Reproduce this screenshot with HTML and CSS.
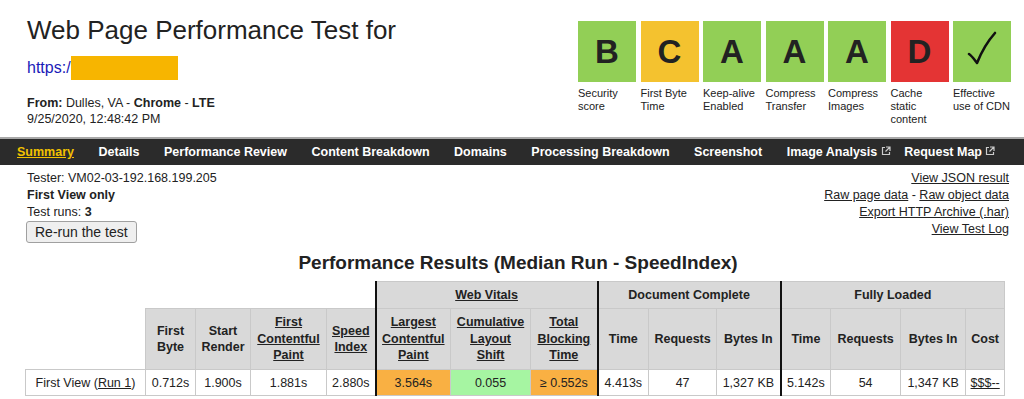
FILE: index.html
```html
<!DOCTYPE html>
<html lang="en">
<head>
    <meta charset="UTF-8">
    <meta name="viewport" content="width=device-width, initial-scale=1.0">
    <title>Web Page Performance Test</title>
    <link rel="stylesheet" href="styles.css">
</head>
<body>
    <div class="page-head">
        <div class="title-block">
            <h1>Web Page Performance Test for</h1>
            <div class="url">
                <a href="#">https:/</a><span class="redact"></span>
            </div>
            <p class="meta"><b>From:</b> Dulles, VA - <b>Chrome</b> - <b>LTE</b><br>9/25/2020, 12:48:42 PM</p>
        </div>
        <ul class="grades">
            <li><div class="grade green">B</div><span>Security score</span></li>
            <li><div class="grade yellow">C</div><span>First Byte Time</span></li>
            <li><div class="grade green">A</div><span>Keep-alive Enabled</span></li>
            <li><div class="grade green">A</div><span>Compress Transfer</span></li>
            <li><div class="grade green">A</div><span>Compress Images</span></li>
            <li><div class="grade red">D</div><span>Cache static content</span></li>
            <li>
                <div class="grade green">
                    <svg width="58" height="61" viewBox="0 0 58 61"><path d="M16 33 C19 35 21 38 24 42 C28 32 34 21 42 12" fill="none" stroke="#111" stroke-width="2.6" stroke-linecap="round" stroke-linejoin="round"/></svg>
                </div>
                <span>Effective use of CDN</span>
            </li>
        </ul>
    </div>

    <!-- 顶部导航 -->
    <ul class="tabs">
        <li><a class="current" href="#">Summary</a></li>
        <li><a href="#">Details</a></li>
        <li><a href="#">Performance Review</a></li>
        <li><a href="#">Content Breakdown</a></li>
        <li><a href="#">Domains</a></li>
        <li><a href="#">Processing Breakdown</a></li>
        <li><a href="#">Screenshot</a></li>
        <li class="has-ext"><a href="#">Image Analysis <svg class="ext" width="10" height="10" viewBox="0 0 10 10"><path d="M4 1.5H1.5V8.5H8.5V6" fill="none" stroke="#ccc" stroke-width="1.2"/><path d="M5 1H9V5M9 1L4.5 5.5" fill="none" stroke="#ccc" stroke-width="1.2"/></svg></a></li>
        <li class="has-ext"><a href="#">Request Map <svg class="ext" width="10" height="10" viewBox="0 0 10 10"><path d="M4 1.5H1.5V8.5H8.5V6" fill="none" stroke="#ccc" stroke-width="1.2"/><path d="M5 1H9V5M9 1L4.5 5.5" fill="none" stroke="#ccc" stroke-width="1.2"/></svg></a></li>
    </ul>

    <div class="info">
        <div class="test-info">
            <div>Tester: VM02-03-192.168.199.205</div>
            <div><b>First View only</b></div>
            <div>Test runs: <b>3</b></div>
            <button>Re-run the test</button>
        </div>
        <div class="raw-links">
            <div><a href="#">View JSON result</a></div>
            <div><a href="#">Raw page data</a> - <a href="#">Raw object data</a></div>
            <div><a href="#">Export HTTP Archive (.har)</a></div>
            <div><a href="#">View Test Log</a></div>
        </div>
    </div>

    <h2 class="results-title">Performance Results (Median Run - SpeedIndex)</h2>

    <table class="results">
        <colgroup>
            <col class="c-label">
            <col class="c-fb"><col class="c-sr"><col class="c-fcp"><col class="c-si">
            <col class="c-lcp"><col class="c-cls"><col class="c-tbt">
            <col class="c-time"><col class="c-req"><col class="c-bytes">
            <col class="c-time2"><col class="c-req2"><col class="c-bytes2"><col class="c-cost">
        </colgroup>
        <tr class="group-row">
            <td class="blank" colspan="5"></td>
            <th class="thick-l thick-r" colspan="3"><a href="#">Web Vitals</a></th>
            <th class="thick-r" colspan="3">Document Complete</th>
            <th colspan="4">Fully Loaded</th>
        </tr>
        <tr class="head-row">
            <td class="blank"></td>
            <th>First<br>Byte</th>
            <th>Start<br>Render</th>
            <th><a href="#">First<br>Contentful<br>Paint</a></th>
            <th><a href="#">Speed<br>Index</a></th>
            <th class="thick-l"><a href="#">Largest<br>Contentful<br>Paint</a></th>
            <th><a href="#">Cumulative<br>Layout<br>Shift</a></th>
            <th class="thick-r"><a href="#">Total<br>Blocking<br>Time</a></th>
            <th>Time</th>
            <th>Requests</th>
            <th class="thick-r">Bytes In</th>
            <th>Time</th>
            <th>Requests</th>
            <th>Bytes In</th>
            <th>Cost</th>
        </tr>
        <tr class="data-row">
            <td>First View (<a href="#">Run 1</a>)</td>
            <td>0.712s</td>
            <td>1.900s</td>
            <td>1.881s</td>
            <td>2.880s</td>
            <td class="thick-l warn">3.564s</td>
            <td class="good">0.055</td>
            <td class="thick-r warn">&ge; 0.552s</td>
            <td>4.413s</td>
            <td>47</td>
            <td class="thick-r">1,327 KB</td>
            <td>5.142s</td>
            <td>54</td>
            <td>1,347 KB</td>
            <td><a href="#">$$$--</a></td>
        </tr>
    </table>
</body>
</html>
```

FILE: styles.css
```css
*{
    margin: 0px;
    padding: 0px;
    box-sizing: border-box;
}

body{
    font-family: "Liberation Sans", Arial, sans-serif;
    font-size: 12.5px;
    color: #222;
    background: #fff;
}

a{
    color: #222;
}

/* 页头 */
.page-head{
    height: 137px;
    padding: 15px 13px 0 27px;
    display: flex;
    justify-content: space-between;
    align-items: flex-start;
}
.page-head h1{
    font-size: 26px;
    font-weight: normal;
    line-height: 30px;
    color: #222;
}
.page-head .url{
    display: flex;
    align-items: center;
    height: 24px;
    margin-top: 11px;
    font-size: 16px;
}
.page-head .url a{
    color: #1a1ab8;
    text-decoration: none;
}
.page-head .redact{
    display: inline-block;
    width: 107px;
    height: 24px;
    background: #f7b500;
}
.page-head .meta{
    margin-top: 16px;
    line-height: 15.5px;
}

.grades{
    display: flex;
    gap: 4.5px;
    list-style: none;
    margin-top: 6px;
}
.grades li{
    width: 58px;
}
.grades .grade{
    height: 61px;
    display: flex;
    align-items: center;
    justify-content: center;
    font-size: 33px;
    font-weight: bold;
    color: #222;
}
.grades .green{
    background: #92cf56;
}
.grades .yellow{
    background: #f4c22f;
}
.grades .red{
    background: #e43434;
}
.grades span{
    display: block;
    margin-top: 5px;
    font-size: 11px;
    line-height: 13px;
}

/* 导航 */
.tabs{
    display: flex;
    gap: 24.5px;
    list-style: none;
    height: 28px;
    padding-left: 17px;
    align-items: center;
    background: #2b2b2b;
    border-top: 2px solid #a8a8a8;
}
.tabs .has-ext{
    margin-right: -11px;
}
.tabs a{
    color: #fff;
    font-weight: bold;
    font-size: 12.5px;
    text-decoration: none;
}
.tabs a.current{
    color: #f2c200;
    text-decoration: underline;
}

/* 测试信息 */
.info{
    display: flex;
    justify-content: space-between;
    padding: 5px 15px 0 27px;
    line-height: 17px;
}
.info button{
    margin-top: 0px;
    margin-left: -1px;
    height: 22px;
    padding: 0 8px;
    font-family: inherit;
    font-size: 14px;
    color: #222;
    background: #efefef;
    border: 1px solid #a0a0a0;
    border-radius: 3px;
}
.raw-links{
    text-align: right;
}

.results-title{
    margin-top: 9px;
    text-align: center;
    font-size: 19px;
    line-height: 22px;
    padding-left: 12px;
}

/* 结果表格 */
.results{
    margin: 7px 0 0 25px;
    border-collapse: collapse;
    table-layout: fixed;
    width: 979px;
}
.results .c-label{ width: 120px; }
.results .c-fb{ width: 50px; }
.results .c-sr{ width: 55px; }
.results .c-fcp{ width: 76px; }
.results .c-si{ width: 49px; }
.results .c-lcp{ width: 75px; }
.results .c-cls{ width: 80px; }
.results .c-tbt{ width: 67px; }
.results .c-time{ width: 51px; }
.results .c-req{ width: 68px; }
.results .c-bytes{ width: 64px; }
.results .c-time2{ width: 50px; }
.results .c-req2{ width: 70px; }
.results .c-bytes2{ width: 65px; }
.results .c-cost{ width: 39px; }

.results th,
.results td{
    border: 1px solid #c9c9c9;
    text-align: center;
    white-space: nowrap;
}
.results th{
    background: #d9d9d9;
    font-weight: bold;
    line-height: 16.5px;
}
.results .blank{
    border: none;
    background: none;
}
.results .group-row th{
    height: 27px;
}
.results .head-row th{
    height: 61px;
}
.results .data-row td{
    height: 26px;
}
.results .thick-l{
    border-left: 2px solid #111;
}
.results .thick-r{
    border-right: 2px solid #111;
}
.results .warn{
    background: #f9b043;
}
.results .good{
    background: #a6f5a2;
}
```
